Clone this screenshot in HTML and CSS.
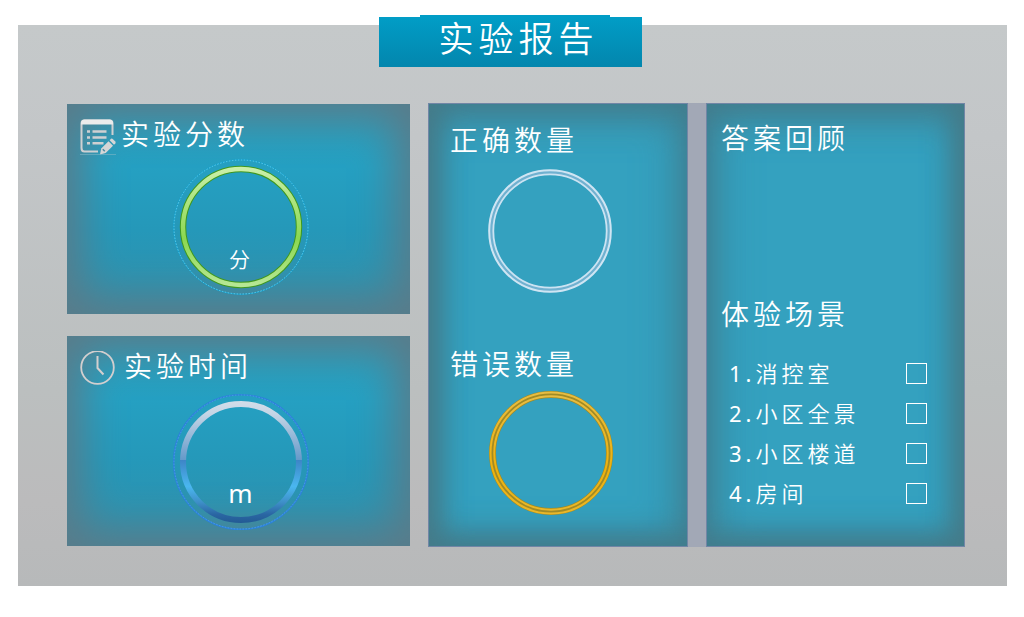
FILE: index.html
```html
<!DOCTYPE html>
<html lang="zh-CN">
<head>
<meta charset="utf-8">
<meta name="viewport" content="width=device-width, initial-scale=1">
<title>实验报告</title>
<link rel="stylesheet" href="styles.css">
</head>
<body>
<main class="report">
  <header class="banner"><h1 class="banner-title">实验报告</h1></header>
  <div class="board">
    <div class="cards">
      <section class="card">
        <div class="card-head">
          <svg class="icon" viewBox="0 0 36 36" fill="none" aria-hidden="true">
            <path d="M32.5 16V4.5Q32.500 1.500 29.500 1.500H4.500Q1.500 1.500 1.500 4.500V29Q1.500 32.500 4.500 32.500H18" stroke="#cfd0d2" stroke-width="2"/>
            <path d="M1 5.500V4Q1 .5 4.500 .5H29.500Q33 .5 33 4V5.500Z" fill="#ececec"/>
            <path d="M7 12.500H10M7 18.500H10M7 24.200H10M12.500 12.500H26.500M12.500 18.500H26.500M12.500 24.200H23.500" stroke="#cfd0d2" stroke-width="2.400"/>
            <path d="M20 35.500L21.200 29.500L28.500 22.300L33 26.800L25.700 34Z" fill="#d6d6d6"/>
            <path d="M29.600 21.200L31 19.800Q32 19.200 33 20.200L35.300 22.500Q36 23.400 35.300 24.400L34 25.700Z" fill="#d6d6d6"/>
            <path d="M22.800 30.200L24.800 32.200" stroke="#4b8ba0" stroke-width="1.500"/>
            <path d="M0 35.500H36" stroke="#7db5c6" stroke-width="1" opacity=".6"/>
          </svg>
          <h2 class="heading">实验分数</h2>
        </div>
        <div class="gauge">
          <svg class="dial" viewBox="0 0 138 138" fill="none" aria-hidden="true">
            <defs>
              <linearGradient id="green" x1="0" y1="0" x2="0" y2="1">
                <stop offset="0" stop-color="#c9efa8"/><stop offset=".6" stop-color="#8bd850"/><stop offset="1" stop-color="#b6e794"/>
              </linearGradient>
            </defs>
            <circle cx="69" cy="69" r="67.300" stroke="#129fce"/>
            <circle cx="69" cy="69" r="67" stroke="#6ed5f3" stroke-width=".8" stroke-dasharray="1.500 1.500"/>
            <circle cx="69" cy="69" r="58" stroke="#40981e" stroke-width="6.400"/>
            <circle cx="69" cy="69" r="58" stroke="url(#green)" stroke-width="4.400"/>
          </svg>
          <span class="unit">分</span>
        </div>
      </section>
      <section class="card">
        <div class="card-head">
          <svg class="icon" viewBox="0 0 36 36" fill="none" stroke="#d3cfcf" aria-hidden="true">
            <circle cx="17.500" cy="16.500" r="16.300" stroke-width="1.800"/>
            <path d="M17.500 5V17L23.500 23.500" stroke-width="2"/>
          </svg>
          <h2 class="heading heading-time">实验时间</h2>
        </div>
        <div class="gauge gauge-time">
          <svg class="dial" viewBox="0 0 138 138" fill="none" aria-hidden="true">
            <defs>
              <linearGradient id="blue" gradientUnits="userSpaceOnUse" x1="0" y1="8" x2="0" y2="130">
                <stop offset="0" stop-color="#d3dde9"/><stop offset=".1" stop-color="#c6d6e6"/><stop offset=".48" stop-color="#659aca"/>
                <stop offset=".48" stop-color="#3d84c6"/><stop offset=".7" stop-color="#4ab7f0"/><stop offset=".83" stop-color="#3e8fc8"/><stop offset=".93" stop-color="#2a66a3"/><stop offset="1" stop-color="#235a94"/>
              </linearGradient>
            </defs>
            <circle cx="69" cy="69" r="67.300" stroke="#2c82d8" stroke-width="1.600"/>
            <circle cx="69" cy="69" r="67" stroke="#55a6ef" stroke-width=".7" stroke-dasharray="1.500 1.500"/>
            <circle cx="69" cy="69" r="58" stroke="url(#blue)" stroke-width="6"/>
          </svg>
          <span class="unit unit-time">m</span>
        </div>
      </section>
    </div>
    <div class="panels">
      <section class="panel panel-counts">
        <h2 class="heading">正确数量</h2>
        <svg class="ring" viewBox="0 0 124 124" fill="none" aria-hidden="true">
          <circle cx="62" cy="62" r="58.800" stroke="#70b1d0" stroke-width="5"/>
          <circle cx="62" cy="62" r="60.800" stroke="#cfe5f3" stroke-width="2"/>
          <circle cx="62" cy="62" r="56.700" stroke="#cbe3f2" stroke-width="1.800"/>
        </svg>
        <h2 class="heading heading-wrong">错误数量</h2>
        <svg class="ring ring-wrong" viewBox="0 0 124 124" fill="none" aria-hidden="true">
          <defs>
            <linearGradient id="gold" x1="0" y1="0" x2="0" y2="1">
              <stop offset="0" stop-color="#e8bd42"/><stop offset=".65" stop-color="#eeb10c"/><stop offset="1" stop-color="#eab728"/>
            </linearGradient>
          </defs>
          <circle cx="62" cy="62" r="58.500" stroke="#a08b25" stroke-width="7"/>
          <circle cx="62" cy="62" r="60.500" stroke="url(#gold)" stroke-width="2"/>
          <circle cx="62" cy="62" r="56.700" stroke="url(#gold)" stroke-width="2"/>
        </svg>
      </section>
      <section class="panel panel-review">
        <h2 class="heading">答案回顾</h2>
        <h2 class="heading heading-scene">体验场景</h2>
        <ul class="scenes">
          <li class="scene"><label for="scene1">1.消控室</label><input class="tick" type="checkbox" id="scene1"></li>
          <li class="scene"><label for="scene2">2.小区全景</label><input class="tick" type="checkbox" id="scene2"></li>
          <li class="scene"><label for="scene3">3.小区楼道</label><input class="tick" type="checkbox" id="scene3"></li>
          <li class="scene"><label for="scene4">4.房间</label><input class="tick" type="checkbox" id="scene4"></li>
        </ul>
      </section>
    </div>
  </div>
</main>
</body>
</html>
```
FILE: styles.css
```css
* { box-sizing: border-box; }

body {
  margin: 0;
  padding: 25px 17px 31px 18px;
  background: #fff;
  color: #fff;
  font-family: "Noto Sans CJK SC", sans-serif;
  font-weight: 350;
}

h1, h2, ul { margin: 0; padding: 0; }

.report {
  display: flex;
  flex-direction: column;
  gap: 36px;
  padding: 0 42px 39px 49px;
  background: linear-gradient(#c5c9ca, #c3c6c8 20%, #bbbfbf 65%, #bbbbbc 85%, #b7b9ba);
}

.banner {
  position: relative;
  align-self: center;
  width: 263px;
  height: 50px;
  margin-top: -8px;
  margin-right: 12px;
  padding-left: 60px;
  background: linear-gradient(#019dc6, #0386ad);
}

.banner::before {
  content: "";
  position: absolute;
  top: -2px;
  left: 41px;
  right: 32px;
  height: 2px;
  background: #019dc6;
}

.banner-title {
  font-size: 35px;
  font-weight: 350;
  letter-spacing: 5px;
  line-height: 40px;
  white-space: nowrap;
}

.board {
  display: grid;
  grid-template-columns: 343fr 537fr;
  gap: 18px;
}

.cards {
  display: grid;
  grid-template-rows: 1fr 1fr;
  gap: 22px;
  padding: 1px 0;
}

.card {
  min-height: 210px;
  padding: 13px 13px 11px;
  background: linear-gradient(#2a9ebb, #25a0c2 30%, #2598b9 60%, #338fa9);
  box-shadow: inset 0 0 40px 15px #5a7c8a;
}

.card-head {
  display: flex;
  gap: 5px;
}

.icon {
  width: 36px;
  height: 36px;
  margin-top: 2px;
}

.heading {
  font-size: 28px;
  font-weight: 350;
  letter-spacing: 4px;
  line-height: 32px;
  white-space: nowrap;
}

.heading-time { padding-left: 3px; }

.gauge {
  display: grid;
  justify-items: center;
  width: 142px;
  margin: 3px auto 0;
  padding-left: 4px;
}

.gauge-time { margin-top: 6px; }

.dial, .unit { grid-area: 1 / 1; }

.dial {
  width: 138px;
  height: 138px;
}

.unit {
  align-self: end;
  padding-bottom: 24px;
  padding-right: 2px;
  font-size: 21px;
  line-height: 28px;
}

.unit-time {
  padding-right: 0;
  font-family: "Noto Sans", sans-serif;
  font-size: 26px;
  font-weight: 400;
}

.panels {
  display: grid;
  grid-template-columns: 260fr 259fr;
  gap: 18px;
  background: #a2a8b6;
}

.panel {
  border: 1px solid #7186a6;
  background: #34a1bf;
}

.panel-counts {
  padding: 19px 21px 30px;
  box-shadow:
    inset 20px 0 30px -10px #457b89,
    inset -10px 0 50px -10px #417f91,
    inset 0 20px 40px -10px #457b89,
    inset 0 -20px 30px -10px #457b89;
}

.ring {
  display: block;
  width: 124px;
  height: 124px;
  margin: 14px 0 0 38px;
}

.heading-wrong { margin-top: 54px; }
.ring-wrong { margin: 12px 0 0 39px; }

.panel-review {
  padding: 17px 37px 30px 14px;
  box-shadow:
    inset -20px 0 30px -10px #457b89,
    inset 10px 0 50px -10px #417f91,
    inset 0 20px 40px -10px #457b89,
    inset 0 -20px 30px -10px #457b89;
}

.heading-scene { margin-top: 144px; }

.scenes {
  display: grid;
  grid-auto-rows: 40px;
  margin-top: 24px;
  padding-left: 8px;
  list-style: none;
}

.scene {
  display: flex;
  align-items: center;
  justify-content: space-between;
  font-family: "Noto Sans", "Noto Sans CJK SC DemiLight", "Noto Sans CJK SC", sans-serif;
  font-size: 22px;
  font-weight: 400;
  letter-spacing: 4px;
  line-height: 32px;
  white-space: nowrap;
}

.tick {
  appearance: none;
  width: 21px;
  height: 21px;
  margin: 0;
  border: 1px solid #fff;
  border-radius: 0;
}

.tick:checked { background: #fff; }
```
